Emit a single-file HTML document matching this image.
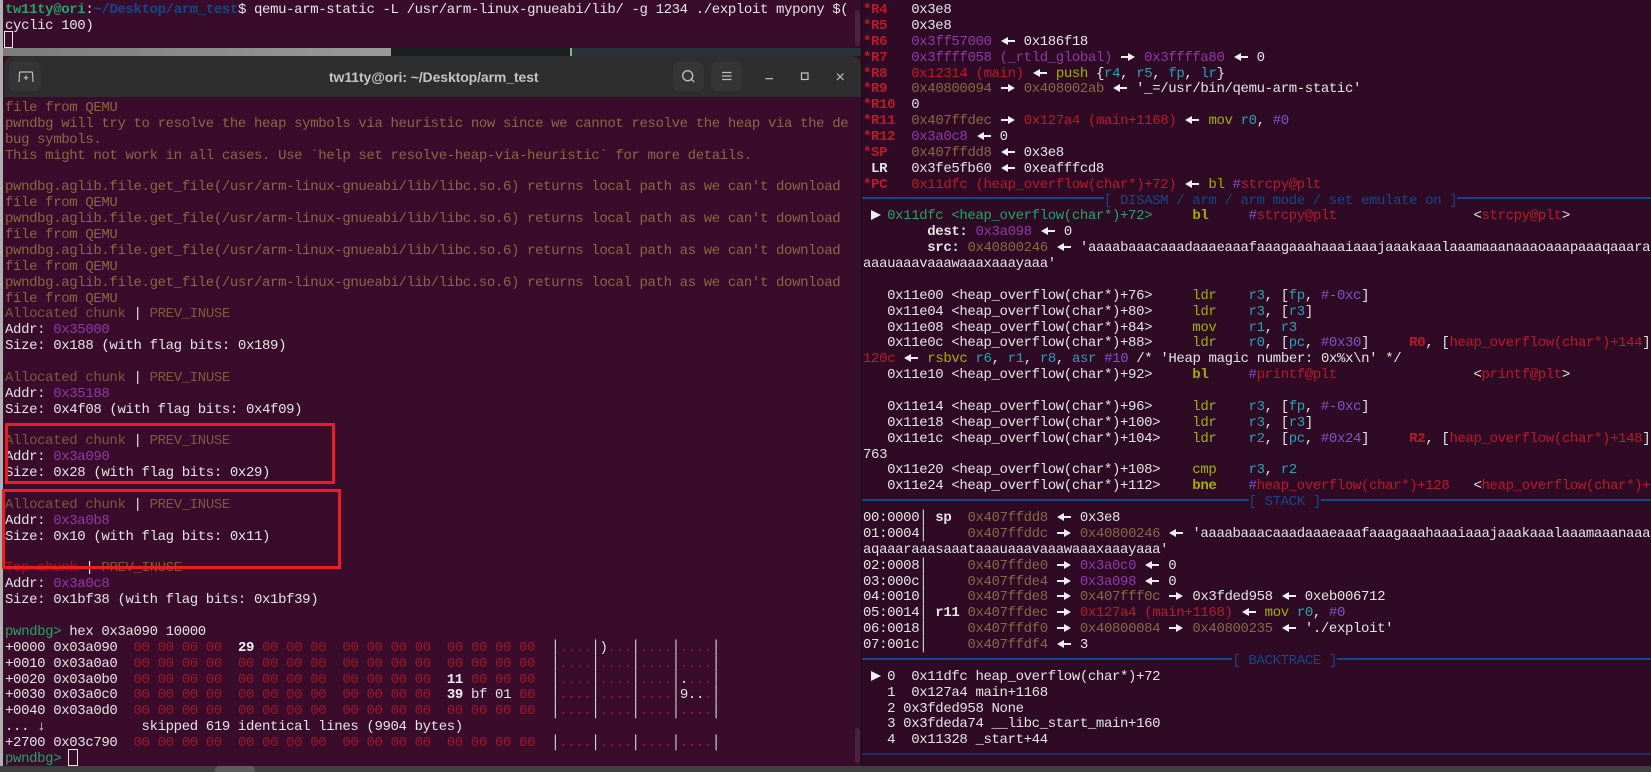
<!DOCTYPE html>
<html><head><meta charset="utf-8"><title>terminal</title>
<style>
html,body{margin:0;padding:0;background:#2f0a24}
#w{position:relative;width:1651px;height:772px;overflow:hidden;background:#2f0a24}
.abs{position:absolute}
pre{position:absolute;margin:0;font:14px/15.87px "Liberation Mono",monospace;letter-spacing:-.37px;color:#e4e4e4;white-space:pre;overflow:hidden}
b{font-weight:normal}
.B{font-weight:bold}
.r{color:#b81a2a}.rd{color:#9c1728}.p{color:#8e3aa6}.y{color:#8a6645}.yd{color:#7a5a3e}
.g{color:#26a269}.bl{color:#12488b}.l{color:#a2b000}.c{color:#2aa1b3}.v{color:#7a55c8}.w{color:#f2f2f2}
i{display:inline-block;position:relative;width:16.06px;height:10px;vertical-align:-1px}
i:before{content:"";position:absolute;top:4px;height:2px;width:9px;background:#eee}
i:after{content:"";position:absolute;top:1px;border-top:4px solid transparent;border-bottom:4px solid transparent}
i.a:before{left:6px}
i.a:after{left:1px;border-right:7px solid #eee}
i.z:before{left:1px}
i.z:after{left:8px;border-left:7px solid #eee}
i.t:before{display:none}
i.t:after{left:0;top:0;border-top:5px solid transparent;border-bottom:5px solid transparent;border-left:10px solid #eee}
.bx{position:absolute;border:3px solid #ed1c24;box-sizing:border-box}
.sep{position:absolute;left:862px;right:0;height:2px;background:#12488b}
</style></head><body><div id="w">

<div class="abs" style="left:0;top:0;width:861px;height:772px;background:#3a0c2b"></div>
<div class="abs" style="left:861px;top:0;width:1px;height:772px;background:#0f0f0f"></div>
<div class="abs" style="left:0;top:0;width:3px;height:766px;background:#b0b0b0"></div>
<div class="abs" style="left:855px;top:10px;width:5px;height:36px;background:#4a2140;border-radius:3px"></div>

<pre style="left:5px;top:3px;width:855px;height:46px"><b class="g B">tw11ty@ori</b>:<b class="bl B">~/Desktop/arm_test</b>$ qemu-arm-static -L /usr/arm-linux-gnueabi/lib/ -g 1234 ./exploit mypony $(
cyclic 100)</pre>
<div class="abs" style="left:4px;top:31px;width:7px;height:15px;border:1px solid #e8e8e8"></div>

<div class="abs" style="left:3px;top:48px;width:388px;height:8px;background:linear-gradient(90deg,#7c7c7c,#9a9a9a)"></div>
<div class="abs" style="left:391px;top:48px;width:179px;height:8px;background:#1b1f22"></div>
<div class="abs" style="left:570px;top:48px;width:2px;height:8px;background:#8fae8a"></div>
<div class="abs" style="left:572px;top:48px;width:289px;height:8px;background:#27323b"></div>

<div class="abs" style="left:4px;top:56px;width:857px;height:41px;background:#2e2e2e;border-radius:10px 10px 0 0"></div>
<div class="abs" style="left:9px;top:62px;width:32px;height:29px;background:#353535;border-radius:6px"></div>
<svg class="abs" style="left:9px;top:62px" width="32" height="29" fill="none" stroke="#bdbdbd" stroke-width="1.2"><path d="M10 20 L10.5 11 Q10.5 10 11.5 10 H22.5 Q23.5 10 23.5 11 L24 20"/><path d="M17 13.5v4.5M14.8 15.7h4.5"/></svg>
<div class="abs" style="left:329px;top:68px;width:206px;text-align:center;font:bold 14px/18px 'Liberation Sans',sans-serif;color:#c4c4c4;white-space:nowrap;letter-spacing:-.1px">tw11ty@ori: ~/Desktop/arm_test</div>
<div class="abs" style="left:673px;top:62px;width:31px;height:29px;background:#353535;border-radius:6px"></div>
<div class="abs" style="left:711px;top:62px;width:31px;height:29px;background:#353535;border-radius:6px"></div>
<svg class="abs" style="left:673px;top:62px" width="31" height="29" fill="none" stroke="#bdbdbd" stroke-width="1.4"><circle cx="14.7" cy="13.7" r="5"/><path d="M18.5 17.5l2.7 2.4"/></svg>
<svg class="abs" style="left:711px;top:62px" width="31" height="29" fill="none" stroke="#bdbdbd" stroke-width="1.2"><path d="M11 10.5h9.5M11 14h9.5M11 17.5h9.5"/></svg>
<svg class="abs" style="left:760px;top:66px" width="95" height="22" fill="none" stroke="#c4c4c4" stroke-width="1.2"><path d="M5.5 12.7h7.5"/><rect x="41.5" y="7" width="6.5" height="6.5"/><path d="M77 7.5l6.5 6.5M83.5 7.5L77 14"/></svg>

<pre style="left:5px;top:101px;width:855px;height:665px;color:#e4e4e4"><b class="y">file from QEMU
pwndbg will try to resolve the heap symbols via heuristic now since we cannot resolve the heap via the de
bug symbols.
This might not work in all cases. Use `help set resolve-heap-via-heuristic` for more details.

pwndbg.aglib.file.get_file(/usr/arm-linux-gnueabi/lib/libc.so.6) returns local path as we can't download
file from QEMU
pwndbg.aglib.file.get_file(/usr/arm-linux-gnueabi/lib/libc.so.6) returns local path as we can't download
file from QEMU
pwndbg.aglib.file.get_file(/usr/arm-linux-gnueabi/lib/libc.so.6) returns local path as we can't download
file from QEMU
pwndbg.aglib.file.get_file(/usr/arm-linux-gnueabi/lib/libc.so.6) returns local path as we can't download
file from QEMU</b>
<b class="yd">Allocated chunk</b> | <b class="yd">PREV_INUSE</b>
Addr: <b class="p">0x35000</b>
Size: 0x188 (with flag bits: 0x189)

<b class="yd">Allocated chunk</b> | <b class="yd">PREV_INUSE</b>
Addr: <b class="p">0x35188</b>
Size: 0x4f08 (with flag bits: 0x4f09)

<b class="yd">Allocated chunk</b> | <b class="yd">PREV_INUSE</b>
Addr: <b class="p">0x3a090</b>
Size: 0x28 (with flag bits: 0x29)

<b class="yd">Allocated chunk</b> | <b class="yd">PREV_INUSE</b>
Addr: <b class="p">0x3a0b8</b>
Size: 0x10 (with flag bits: 0x11)

<b class="rd">Top chunk</b> | <b class="yd">PREV_INUSE</b>
Addr: <b class="p">0x3a0c8</b>
Size: 0x1bf38 (with flag bits: 0x1bf39)

<b class="g">pwndbg&gt;</b> hex 0x3a090 10000
+0000 0x03a090  <b class="rd">00 00 00 00</b>  <b class="w B">29</b> <b class="rd">00 00 00</b>  <b class="rd">00 00 00 00</b>  <b class="rd">00 00 00 00</b>  │<b class="rd">....</b>│)<b class="rd">...</b>│<b class="rd">....</b>│<b class="rd">....</b>│
+0010 0x03a0a0  <b class="rd">00 00 00 00</b>  <b class="rd">00 00 00 00</b>  <b class="rd">00 00 00 00</b>  <b class="rd">00 00 00 00</b>  │<b class="rd">....</b>│<b class="rd">....</b>│<b class="rd">....</b>│<b class="rd">....</b>│
+0020 0x03a0b0  <b class="rd">00 00 00 00</b>  <b class="rd">00 00 00 00</b>  <b class="rd">00 00 00 00</b>  <b class="w B">11</b> <b class="rd">00 00 00</b>  │<b class="rd">....</b>│<b class="rd">....</b>│<b class="rd">....</b>│.<b class="rd">...</b>│
+0030 0x03a0c0  <b class="rd">00 00 00 00</b>  <b class="rd">00 00 00 00</b>  <b class="rd">00 00 00 00</b>  <b class="w B">39</b> bf 01 <b class="rd">00</b>  │<b class="rd">....</b>│<b class="rd">....</b>│<b class="rd">....</b>│9..<b class="rd">.</b>│
+0040 0x03a0d0  <b class="rd">00 00 00 00</b>  <b class="rd">00 00 00 00</b>  <b class="rd">00 00 00 00</b>  <b class="rd">00 00 00 00</b>  │<b class="rd">....</b>│<b class="rd">....</b>│<b class="rd">....</b>│<b class="rd">....</b>│
... ↓            skipped 619 identical lines (9904 bytes)
+2700 0x03c790  <b class="rd">00 00 00 00</b>  <b class="rd">00 00 00 00</b>  <b class="rd">00 00 00 00</b>  <b class="rd">00 00 00 00</b>  │<b class="rd">....</b>│<b class="rd">....</b>│<b class="rd">....</b>│<b class="rd">....</b>│
<b class="g">pwndbg&gt;</b> </pre>
<div class="abs" style="left:68px;top:749px;width:8px;height:15px;border:1px solid #e8e8e8"></div>

<div class="bx" style="left:5px;top:423px;width:330px;height:61px"></div>
<div class="bx" style="left:2px;top:489px;width:339px;height:80px"></div>

<div class="abs" style="left:855px;top:728px;width:5px;height:35px;background:#4a2140;border-radius:3px"></div>

<div class="sep" style="top:197px"></div>
<div class="sep" style="top:499px"></div>
<div class="sep" style="top:658px"></div>
<div class="sep" style="top:753px;background:#1c2c6e"></div>

<pre style="left:863px;top:3px;width:788px;height:750px"><b class="r B">*R4 </b>  0x3e8
<b class="r B">*R5 </b>  0x3e8
<b class="r B">*R6 </b>  <b class="p">0x3ff57000</b> <i class="a"></i> 0x186f18
<b class="r B">*R7 </b>  <b class="p">0x3ffff058 (_rtld_global)</b> <i class="z"></i> <b class="p">0x3ffffa80</b> <i class="a"></i> 0
<b class="r B">*R8 </b>  <b class="r">0x12314 (main)</b> <i class="a"></i> <b class="l">push</b> {<b class="c">r4</b>, <b class="c">r5</b>, <b class="c">fp</b>, <b class="c">lr</b>}
<b class="r B">*R9 </b>  <b class="y">0x40800094</b> <i class="z"></i> <b class="y">0x408002ab</b> <i class="a"></i> '_=/usr/bin/qemu-arm-static'
<b class="r B">*R10</b>  0
<b class="r B">*R11</b>  <b class="y">0x407ffdec</b> <i class="z"></i> <b class="r">0x127a4 (main+1168)</b> <i class="a"></i> <b class="l">mov</b> <b class="c">r0</b>, <b class="v">#0</b>
<b class="r B">*R12</b>  <b class="p">0x3a0c8</b> <i class="a"></i> 0
<b class="r B">*SP </b>  <b class="y">0x407ffdd8</b> <i class="a"></i> 0x3e8
<b class="B"> LR </b>  0x3fe5fb60 <i class="a"></i> 0xeafffcd8
<b class="r B">*PC </b>  <b class="r">0x11dfc (heap_overflow(char*)+72)</b> <i class="a"></i> <b class="l">bl</b> <b class="v">#</b><b class="r">strcpy@plt</b>
                              <b class="bl" style="background:#2f0a24">[ DISASM / arm / arm mode / set emulate on ]</b>
 <i class="t" style="width:16.06px"></i><b class="g">0x11dfc &lt;heap_overflow(char*)+72&gt;</b>     <b class="l B">bl</b>     <b class="v">#</b><b class="r">strcpy@plt</b>                 &lt;<b class="r">strcpy@plt</b>&gt;
        <b class="B">dest:</b> <b class="p">0x3a098</b> <i class="a"></i> 0
        <b class="B">src:</b> <b class="y">0x40800246</b> <i class="a"></i> 'aaaabaaacaaadaaaeaaafaaagaaahaaaiaaajaaakaaalaaamaaanaaaoaaapaaaqaaara
aaauaaavaaawaaaxaaayaaa'

   0x11e00 &lt;heap_overflow(char*)+76&gt;     <b class="l">ldr</b>    <b class="c">r3</b>, [<b class="c">fp</b>, <b class="v">#-0xc</b>]
   0x11e04 &lt;heap_overflow(char*)+80&gt;     <b class="l">ldr</b>    <b class="c">r3</b>, [<b class="c">r3</b>]
   0x11e08 &lt;heap_overflow(char*)+84&gt;     <b class="l">mov</b>    <b class="c">r1</b>, <b class="c">r3</b>
   0x11e0c &lt;heap_overflow(char*)+88&gt;     <b class="l">ldr</b>    <b class="c">r0</b>, [<b class="c">pc</b>, <b class="v">#0x30</b>]     <b class="r B">R0</b>, [<b class="r">heap_overflow(char*)+144</b>]
<b class="r">120c</b> <i class="a"></i> <b class="l">rsbvc</b> <b class="c">r6</b>, <b class="c">r1</b>, <b class="c">r8</b>, <b class="c">asr</b> <b class="v">#10</b> /* 'Heap magic number: 0x%x\n' */
   0x11e10 &lt;heap_overflow(char*)+92&gt;     <b class="l B">bl</b>     <b class="v">#</b><b class="r">printf@plt</b>                 &lt;<b class="r">printf@plt</b>&gt;

   0x11e14 &lt;heap_overflow(char*)+96&gt;     <b class="l">ldr</b>    <b class="c">r3</b>, [<b class="c">fp</b>, <b class="v">#-0xc</b>]
   0x11e18 &lt;heap_overflow(char*)+100&gt;    <b class="l">ldr</b>    <b class="c">r3</b>, [<b class="c">r3</b>]
   0x11e1c &lt;heap_overflow(char*)+104&gt;    <b class="l">ldr</b>    <b class="c">r2</b>, [<b class="c">pc</b>, <b class="v">#0x24</b>]     <b class="r B">R2</b>, [<b class="r">heap_overflow(char*)+148</b>]
763
   0x11e20 &lt;heap_overflow(char*)+108&gt;    <b class="l">cmp</b>    <b class="c">r3</b>, <b class="c">r2</b>
   0x11e24 &lt;heap_overflow(char*)+112&gt;    <b class="l B">bne</b>    <b class="v">#</b><b class="r">heap_overflow(char*)+128</b>   &lt;<b class="r">heap_overflow(char*)+140&gt;</b>
                                                <b class="bl" style="background:#2f0a24">[ STACK ]</b>
00:0000│ <b class="B">sp</b>  <b class="y">0x407ffdd8</b> <i class="a"></i> 0x3e8
01:0004│     <b class="y">0x407ffddc</b> <i class="z"></i> <b class="y">0x40800246</b> <i class="a"></i> 'aaaabaaacaaadaaaeaaafaaagaaahaaaiaaajaaakaaalaaamaaanaaaoaaapa
aqaaaraaasaaataaauaaavaaawaaaxaaayaaa'
02:0008│     <b class="y">0x407ffde0</b> <i class="z"></i> <b class="p">0x3a0c0</b> <i class="a"></i> 0
03:000c│     <b class="y">0x407ffde4</b> <i class="z"></i> <b class="p">0x3a098</b> <i class="a"></i> 0
04:0010│     <b class="y">0x407ffde8</b> <i class="z"></i> <b class="y">0x407fff0c</b> <i class="z"></i> 0x3fded958 <i class="a"></i> 0xeb006712
05:0014│ <b class="B">r11</b> <b class="y">0x407ffdec</b> <i class="z"></i> <b class="r">0x127a4 (main+1168)</b> <i class="a"></i> <b class="l">mov</b> <b class="c">r0</b>, <b class="v">#0</b>
06:0018│     <b class="y">0x407ffdf0</b> <i class="z"></i> <b class="y">0x40800084</b> <i class="z"></i> <b class="y">0x40800235</b> <i class="a"></i> './exploit'
07:001c│     <b class="y">0x407ffdf4</b> <i class="a"></i> 3
                                              <b class="bl" style="background:#2f0a24">[ BACKTRACE ]</b>
 <i class="t"></i>0  0x11dfc heap_overflow(char*)+72
   1  0x127a4 main+1168
   2 0x3fded958 None
   3 0x3fdeda74 __libc_start_main+160
   4  0x11328 _start+44</pre>

<div class="abs" style="left:0;top:766px;width:1651px;height:6px;background:#3f3f3f"></div>
<div class="abs" style="left:215px;top:766px;width:40px;height:6px;background:#5c5c5c;border-radius:4px 4px 0 0"></div>
</div></body></html>
